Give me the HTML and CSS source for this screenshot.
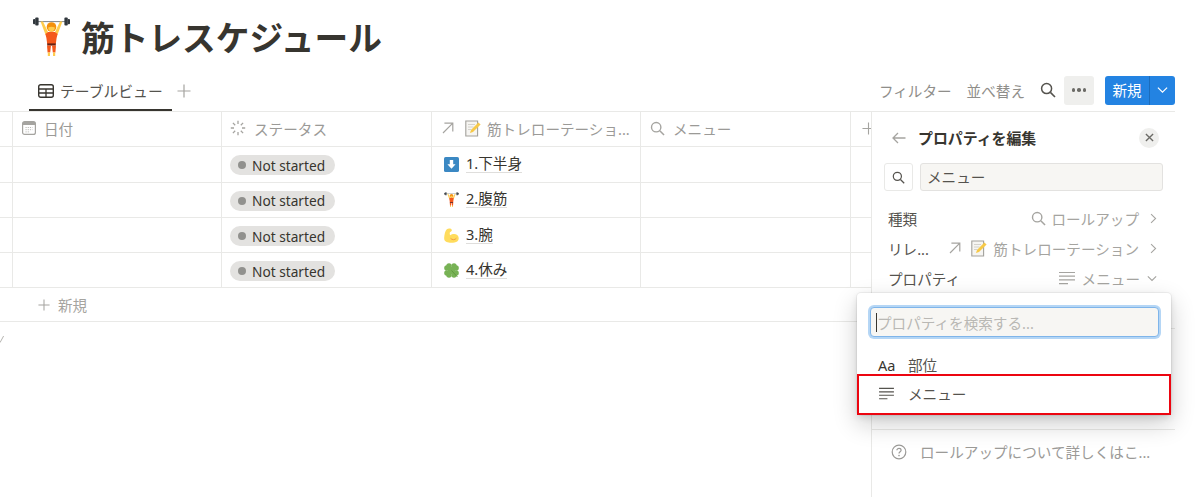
FILE: index.html
```html
<!DOCTYPE html>
<html lang="ja">
<head>
    <meta charset="UTF-8">
    <meta name="viewport" content="width=device-width, initial-scale=1.0">
    <title>筋トレスケジュール</title>
    <link rel="stylesheet" href="styles.css">
</head>
<body>
    <svg class="sprites" xmlns="http://www.w3.org/2000/svg">
        <symbol id="i-lifter" viewBox="0 0 37 39">
            <rect x="3" y="4" width="31" height="1.1" fill="#8a8f94"/>
            <rect x="0" y="2" width="2.4" height="5.2" rx="1" fill="#31373d"/>
            <rect x="2.2" y=".6" width="3.4" height="8" rx="1" fill="#31373d"/>
            <rect x="31.4" y=".6" width="3.4" height="8" rx="1" fill="#31373d"/>
            <rect x="34.6" y="2" width="2.4" height="5.2" rx="1" fill="#31373d"/>
            <path d="M7.6 4.5 L10 4.5 L15 15 L12.6 18 Z" fill="#ffcc4d"/>
            <path d="M29.4 4.5 L27 4.5 L22 15 L24.4 18 Z" fill="#ffcc4d"/>
            <path d="M15 15 L22 15 L24.6 17 L23.6 21 L22.8 27 L14.2 27 L13.4 21 L12.4 17 Z" fill="#f4581c"/>
            <circle cx="18.5" cy="10" r="4.8" fill="#f4900c"/>
            <path d="M15.2 10.6 Q18.5 8.8 21.8 10.6 Q21.8 14.4 18.5 14.4 Q15.2 14.4 15.2 10.6 Z" fill="#ffcc4d"/>
            <rect x="14.2" y="26.4" width="8.6" height="2.2" fill="#662113"/>
            <path d="M14 28.6 L18 28.6 L17.2 35.5 L14.6 35.5 Z" fill="#f4581c"/>
            <path d="M23 28.6 L19 28.6 L19.8 35.5 L22.4 35.5 Z" fill="#f4581c"/>
            <rect x="14.8" y="35.5" width="2.2" height="3.5" fill="#ffcc4d"/>
            <rect x="20" y="35.5" width="2.2" height="3.5" fill="#ffcc4d"/>
        </symbol>
        <symbol id="i-down" viewBox="0 0 15 15">
            <rect x="0" y="0" width="15" height="15" rx="1.6" fill="#3b88c3"/>
            <path d="M5.8 3 H9.2 V7.2 H11.6 L7.5 11.8 L3.4 7.2 H5.8 Z" fill="#fff"/>
        </symbol>
        <symbol id="i-arm" viewBox="0 0 15 15">
            <path d="M2.8 1.2 C4.4 .2 7.4 .4 7.8 2 C8.1 3.4 6.4 4 5.8 4.6 C5.6 5.6 5.8 6.6 6.2 7.2 C8 5.8 11.4 5.4 13.2 7 C15.2 8.8 15.2 12 13.2 13.4 C10.8 15 5.2 15 2.6 14 C.6 13.2 0 11.6 .2 9.6 C.4 6.6 1.2 2.6 2.8 1.2 Z" fill="#ffdc5d"/>
            <path d="M6.6 10.4 C8 12 11 12.2 12.4 10.2" fill="none" stroke="#ef9645" stroke-width=".9"/>
        </symbol>
        <symbol id="i-clover" viewBox="0 0 15 15">
            <g fill="#77b255">
                <circle cx="2.9" cy="5" r="2.7"/><circle cx="5" cy="2.9" r="2.7"/>
                <circle cx="12.1" cy="5" r="2.7"/><circle cx="10" cy="2.9" r="2.7"/>
                <circle cx="2.9" cy="10" r="2.7"/><circle cx="5" cy="12.1" r="2.7"/>
                <circle cx="12.1" cy="10" r="2.7"/><circle cx="10" cy="12.1" r="2.7"/>
                <rect x="4" y="4" width="7" height="7"/>
            </g>
            <path d="M7.5 7.5 L13.5 14" stroke="#5c913b" stroke-width=".8"/>
        </symbol>
        <symbol id="i-memo" viewBox="0 0 16 17">
            <path d="M.8 1 H12.6 V16 H.8 Z" fill="#f6f5f2" stroke="#a3a19c" stroke-width="1.1"/>
            <path d="M3 4.5 H10 M3 7 H8.5 M3 9.5 H6.5" stroke="#ccc9c2" stroke-width=".8"/>
            <path d="M5 13 L6 10 L13.4 2.4 L15.6 4.6 L8 12 Z" fill="#f7c948"/>
        </symbol>
        <symbol id="i-lines" viewBox="0 0 16 14">
            <path d="M0 1.5 H16 M0 5.2 H16 M0 8.9 H16 M0 12.6 H9" fill="none" stroke="currentColor" stroke-width="1.2"/>
        </symbol>
        <symbol id="i-search" viewBox="0 0 16 16">
            <circle cx="6.6" cy="6.6" r="5" fill="none" stroke="currentColor" stroke-width="1.5"/>
            <path d="M10.4 10.4 L15 15" stroke="currentColor" stroke-width="1.6"/>
        </symbol>
        <symbol id="i-arrow" viewBox="0 0 12 12">
            <path d="M1 11 L10.8 1.2 M2.4 1.2 H10.8 V9.6" fill="none" stroke="currentColor" stroke-width="1.2"/>
        </symbol>
        <symbol id="i-right" viewBox="0 0 8 12">
            <path d="M1.2 1 L6.4 6 L1.2 11" fill="none" stroke="currentColor" stroke-width="1.2"/>
        </symbol>
        <symbol id="i-down-chev" viewBox="0 0 12 8">
            <path d="M1 1.4 L6 6.4 L11 1.4" fill="none" stroke="currentColor" stroke-width="1.3"/>
        </symbol>
        <symbol id="i-plus" viewBox="0 0 14 14">
            <path d="M7 .5 V13.5 M.5 7 H13.5" stroke="currentColor" stroke-width="1.2"/>
        </symbol>
        <symbol id="i-help" viewBox="0 0 16 16">
            <circle cx="8" cy="8" r="6.8" fill="none" stroke="currentColor" stroke-width="1.2"/>
            <path d="M5.9 6.3 C5.9 3.8 10.1 3.8 10.1 6.3 C10.1 7.9 8 7.8 8 9.6" fill="none" stroke="currentColor" stroke-width="1.2"/>
            <circle cx="8" cy="11.6" r=".8" fill="currentColor"/>
        </symbol>
    </svg>

    <div class="page">
        <header class="title-row">
            <svg class="title-emoji"><use href="#i-lifter"/></svg>
            <h1>筋トレスケジュール</h1>
        </header>

        <div class="view-bar">
            <div class="tab">
                <svg class="tab-icon" viewBox="0 0 16 14">
                    <rect x=".7" y=".7" width="14.6" height="12.6" rx="2" fill="none" stroke="currentColor" stroke-width="1.4"/>
                    <path d="M1 5 H15 M1 9 H15 M8 5 V13" stroke="currentColor" stroke-width="1.3"/>
                </svg>
                テーブルビュー
            </div>
            <svg class="tab-plus"><use href="#i-plus"/></svg>
            <div class="tools">
                <span class="tool-text">フィルター</span>
                <span class="tool-text">並べ替え</span>
                <svg class="tool-search"><use href="#i-search"/></svg>
                <div class="more-btn"><i></i><i></i><i></i></div>
                <div class="new-btn">
                    <span class="new-label">新規</span>
                    <span class="new-caret"><svg><use href="#i-down-chev"/></svg></span>
                </div>
            </div>
        </div>

        <div class="content">
            <div class="table">
                <div class="row head">
                    <div class="cell"></div>
                    <div class="cell">
                        <svg class="head-icon" viewBox="0 0 14 14">
                            <rect x=".6" y=".6" width="12.8" height="12.8" rx="2" fill="#fff" stroke="#a5a4a0" stroke-width="1.2"/>
                            <rect x="1" y="1" width="12" height="3" fill="#a5a4a0"/>
                            <path d="M3.5 6.5 H10.5 M3.5 8.7 H10.5 M3.5 10.9 H8" stroke="#bdbcb8" stroke-width="1" stroke-dasharray="1.2 1"/>
                        </svg>
                        日付
                    </div>
                    <div class="cell">
                        <svg class="head-icon spin" viewBox="0 0 16 16">
                            <path d="M8 .8 V4 M8 12 V15.2 M.8 8 H4 M12 8 H15.2 M2.9 2.9 L5.2 5.2 M10.8 10.8 L13.1 13.1 M13.1 2.9 L10.8 5.2 M5.2 10.8 L2.9 13.1" stroke="#a5a4a0" stroke-width="1.3"/>
                        </svg>
                        ステータス
                    </div>
                    <div class="cell">
                        <svg class="head-arrow"><use href="#i-arrow"/></svg>
                        <svg class="head-memo"><use href="#i-memo"/></svg>
                        <span>筋トレローテーショ...</span>
                    </div>
                    <div class="cell">
                        <svg class="head-icon search"><use href="#i-search"/></svg>
                        メニュー
                    </div>
                    <div class="cell add-col"><svg><use href="#i-plus"/></svg></div>
                </div>

                <div class="row">
                    <div class="cell"></div>
                    <div class="cell"></div>
                    <div class="cell"><span class="pill"><i></i>Not started</span></div>
                    <div class="cell"><svg class="rel-icon"><use href="#i-down"/></svg><span class="rel">1.下半身</span></div>
                    <div class="cell"></div>
                    <div class="cell"></div>
                </div>
                <div class="row">
                    <div class="cell"></div>
                    <div class="cell"></div>
                    <div class="cell"><span class="pill"><i></i>Not started</span></div>
                    <div class="cell"><svg class="rel-icon"><use href="#i-lifter"/></svg><span class="rel">2.腹筋</span></div>
                    <div class="cell"></div>
                    <div class="cell"></div>
                </div>
                <div class="row">
                    <div class="cell"></div>
                    <div class="cell"></div>
                    <div class="cell"><span class="pill"><i></i>Not started</span></div>
                    <div class="cell"><svg class="rel-icon"><use href="#i-arm"/></svg><span class="rel">3.腕</span></div>
                    <div class="cell"></div>
                    <div class="cell"></div>
                </div>
                <div class="row">
                    <div class="cell"></div>
                    <div class="cell"></div>
                    <div class="cell"><span class="pill"><i></i>Not started</span></div>
                    <div class="cell"><svg class="rel-icon"><use href="#i-clover"/></svg><span class="rel">4.休み</span></div>
                    <div class="cell"></div>
                    <div class="cell"></div>
                </div>

                <div class="new-row">
                    <svg><use href="#i-plus"/></svg>
                    新規
                </div>
                <svg class="calc-mark" viewBox="0 0 4 8"><path d="M-2 7 L0 7.6 L3.6 1" fill="none" stroke="#b5b4b0" stroke-width="1"/></svg>
            </div>

            <aside class="panel">
                <div class="panel-head">
                    <svg class="back" viewBox="0 0 14 12"><path d="M13.5 6 H1 M6 1 L1 6 L6 11" fill="none" stroke="currentColor" stroke-width="1.3"/></svg>
                    <span class="panel-title">プロパティを編集</span>
                    <span class="close">
                        <svg viewBox="0 0 10 10"><path d="M1 1 L9 9 M9 1 L1 9" stroke="currentColor" stroke-width="1.5"/></svg>
                    </span>
                </div>
                <div class="panel-search">
                    <span class="icon-box"><svg><use href="#i-search"/></svg></span>
                    <span class="name-input">メニュー</span>
                </div>
                <div class="prop">
                    <span class="prop-name">種類</span>
                    <span class="prop-value">
                        <svg class="v-search"><use href="#i-search"/></svg>ロールアップ
                        <svg class="chev"><use href="#i-right"/></svg>
                    </span>
                </div>
                <div class="prop">
                    <span class="prop-name">リレ...</span>
                    <span class="prop-value">
                        <svg class="v-arrow"><use href="#i-arrow"/></svg>
                        <svg class="v-memo"><use href="#i-memo"/></svg>筋トレローテーション
                        <svg class="chev"><use href="#i-right"/></svg>
                    </span>
                </div>
                <div class="prop">
                    <span class="prop-name">プロパティ</span>
                    <span class="prop-value">
                        <svg class="v-lines"><use href="#i-lines"/></svg>メニュー
                        <svg class="chev-down"><use href="#i-down-chev"/></svg>
                    </span>
                </div>
                <div class="panel-rule first"></div>
                <div class="hidden-row"><svg><use href="#i-help"/></svg></div>
                <div class="panel-rule"></div>
                <div class="help">
                    <svg><use href="#i-help"/></svg>
                    ロールアップについて詳しくはこ...
                </div>
            </aside>
        </div>

        <div class="popover">
            <div class="pop-input"><i class="caret"></i>プロパティを検索する...</div>
            <div class="pop-item"><span class="aa">Aa</span>部位</div>
            <div class="pop-item"><svg><use href="#i-lines"/></svg>メニュー</div>
            <div class="red-box"></div>
        </div>
    </div>
</body>
</html>
```

FILE: styles.css
```css
* {
    box-sizing: border-box;
}
html, body {
    height: 100%;
}
body {
    margin: 0;
    background-color: #ffffff;
    color: #37352f;
    font-family: "Noto Sans", "Noto Sans CJK JP", sans-serif;
    font-size: 14.6px;
    overflow: hidden;
}
svg {
    display: block;
    flex: none;
}
.sprites {
    display: none;
}
.page {
    position: relative;
    height: 497px;
    padding-right: 25px;
    display: flex;
    flex-direction: column;
}

/* title */
.title-row {
    height: 74px;
    padding: 17px 0 0 33px;
    display: flex;
    align-items: flex-start;
    gap: 11px;
}
.title-emoji {
    width: 37px;
    height: 39px;
}
h1 {
    margin: 0;
    font-size: 33.7px;
    line-height: 42px;
    font-weight: 700;
    color: #37352f;
}

/* tabs + tools */
.view-bar {
    height: 38px;
    padding-left: 29px;
    display: flex;
    align-items: flex-start;
    border-bottom: 1px solid #e9e9e7;
}
.tab {
    width: 143px;
    height: 37px;
    display: flex;
    align-items: center;
    gap: 6px;
    padding: 0 0 2px 9px;
    border-bottom: 2px solid #37352f;
    color: #55534e;
    font-size: 14.8px;
}
.tab-icon {
    width: 16px;
    height: 14px;
    color: #37352f;
}
.tab-plus {
    width: 14px;
    height: 14px;
    margin: 10px 0 0 5px;
    color: #a5a4a0;
}
.tools {
    margin-left: auto;
    padding-top: 1px;
    display: flex;
    align-items: center;
    height: 31px;
}
.tool-text {
    margin-right: 15px;
    color: #8f8e8a;
}
.tool-search {
    width: 16px;
    height: 16px;
    margin: 0 8px 0 0;
    color: #55534e;
}
.more-btn {
    width: 30px;
    height: 29px;
    margin-right: 11px;
    background-color: #efefed;
    border-radius: 3px;
    display: flex;
    align-items: center;
    justify-content: center;
    gap: 2px;
}
.more-btn i {
    width: 3.5px;
    height: 3.5px;
    border-radius: 50%;
    background-color: #6b6a66;
}
.new-btn {
    width: 70px;
    height: 29px;
    display: flex;
    background-color: #2383e2;
    border-radius: 3px;
    color: #ffffff;
}
.new-label {
    width: 45px;
    text-align: center;
    line-height: 28px;
    border-right: 1px solid #1b6cbc;
}
.new-caret {
    flex: 1;
    display: flex;
    align-items: center;
    justify-content: center;
}
.new-caret svg {
    width: 11px;
    height: 8px;
}

/* table */
.content {
    flex: 1;
    display: flex;
    min-height: 0;
}
.table {
    width: 871px;
    overflow: hidden;
}
.row {
    height: 35.3px;
    display: grid;
    grid-template-columns: 13px 209px 210px 209px 210px 1fr;
    border-bottom: 1px solid #e9e9e7;
}
.cell {
    border-right: 1px solid #e9e9e7;
    padding-left: 9px;
    display: flex;
    align-items: center;
    min-width: 0;
    white-space: nowrap;
}
.cell:last-child {
    border-right: none;
}
.head {
    color: #9b9a97;
}
.head .cell {
    padding-bottom: 2px;
}
.head-icon {
    width: 14px;
    height: 14px;
    margin-right: 8px;
}
.head-icon.spin {
    width: 16px;
    height: 16px;
    margin-right: 8px;
    margin-left: -1px;
}
.head-icon.search {
    width: 15px;
    height: 15px;
    color: #a5a4a0;
}
.head-arrow {
    width: 12px;
    height: 12px;
    margin: 0 11px 0 1px;
    color: #a5a4a0;
}
.head-memo {
    width: 16px;
    height: 17px;
    margin-right: 6px;
}
.add-col {
    padding-left: 11px;
    color: #a5a4a0;
}
.add-col svg {
    width: 13px;
    height: 13px;
}
.pill {
    height: 20px;
    width: 105px;
    margin: 2px 0 0 -1px;
    padding-left: 8px;
    display: flex;
    align-items: center;
    gap: 6px;
    background-color: #e3e2e0;
    border-radius: 10px;
    color: #37352f;
    font-size: 13.7px;
}
.pill i {
    width: 8px;
    height: 8px;
    border-radius: 50%;
    background-color: #91918e;
}
.rel-icon {
    width: 15px;
    height: 15px;
    margin: 0 8px 0 3px;
}
.rel {
    margin: 0 0 2px -1px;
    border-bottom: 1px solid #dfdedc;
    line-height: 18px;
    color: #37352f;
}
.new-row {
    height: 34px;
    padding-left: 38px;
    display: flex;
    align-items: center;
    gap: 8px;
    color: #a5a4a0;
    border-bottom: 1px solid #e9e9e7;
}
.new-row svg {
    width: 12px;
    height: 12px;
}
.calc-mark {
    width: 4px;
    height: 8px;
    margin-top: 13px;
}

/* side panel */
.panel {
    width: 304px;
    padding: 0 12px;
    border-left: 1px solid #e9e9e7;
    background-color: #ffffff;
    position: relative;
}
.panel-head {
    height: 51px;
    display: flex;
    align-items: center;
    padding-left: 8px;
    gap: 12px;
}
.back {
    width: 14px;
    height: 12px;
    color: #a5a4a0;
}
.panel-title {
    font-weight: 700;
    font-size: 14.9px;
    color: #37352f;
}
.close {
    margin-left: auto;
    margin-right: 4px;
    width: 20px;
    height: 20px;
    border-radius: 50%;
    background-color: #efefed;
    color: #6b6a66;
    display: flex;
    align-items: center;
    justify-content: center;
}
.close svg {
    width: 9px;
    height: 9px;
}
.panel-search {
    display: flex;
    gap: 7px;
    height: 28px;
}
.icon-box {
    width: 29px;
    border: 1px solid #e9e9e7;
    border-radius: 3px;
    display: flex;
    align-items: center;
    justify-content: center;
    color: #55534e;
}
.icon-box svg {
    width: 13px;
    height: 13px;
}
.name-input {
    flex: 1;
    padding-left: 6px;
    line-height: 26px;
    background-color: #f7f6f3;
    border: 1px solid #e3e2e0;
    border-radius: 3px;
    color: #55534e;
}
.prop {
    height: 30px;
    padding: 0 6px 0 4px;
    display: flex;
    align-items: center;
    justify-content: space-between;
}
.panel-search + .prop {
    margin-top: 12px;
}
.prop-name {
    color: #55534e;
}
.prop-value {
    display: flex;
    align-items: center;
    color: #a5a4a0;
}
.v-search {
    width: 15px;
    height: 15px;
    margin-right: 5px;
}
.v-arrow {
    width: 12px;
    height: 12px;
    margin-right: 10px;
}
.v-memo {
    width: 16px;
    height: 17px;
    margin-right: 6px;
}
.v-lines {
    width: 16px;
    height: 14px;
    margin-right: 7px;
}
.chev {
    width: 7px;
    height: 11px;
    margin-left: 11px;
}
.chev-down {
    width: 10px;
    height: 7px;
    margin-left: 7px;
}
.panel-rule {
    height: 1px;
    margin: 0 -12px;
    background-color: #e9e9e7;
}
.panel-rule.first {
    margin-top: 35px;
}
.hidden-row {
    height: 100px;
    padding: 73px 0 0 20px;
    color: #a5a4a0;
}
.hidden-row svg {
    width: 13px;
    height: 13px;
}
.help {
    height: 44px;
    padding: 0 0 1px 7px;
    display: flex;
    align-items: center;
    gap: 13px;
    color: #9b9a97;
}
.help svg {
    width: 16px;
    height: 16px;
}

/* dropdown + annotation */
.popover {
    position: absolute;
    left: 857px;
    top: 293px;
    width: 314px;
    height: 122px;
    padding: 14px 12px 0 13px;
    background-color: #ffffff;
    border-radius: 4px;
    box-shadow: 0 0 0 1px rgba(15, 15, 15, 0.05), 0 3px 6px rgba(15, 15, 15, 0.1), 0 9px 24px rgba(15, 15, 15, 0.2);
}
.pop-input {
    height: 30px;
    margin-bottom: 13px;
    padding-left: 5px;
    display: flex;
    align-items: center;
    background-color: #f7f6f3;
    border: 1px solid #7fb5ea;
    border-radius: 4px;
    box-shadow: 0 0 0 2px #b5d6f5;
    color: #b9b8b4;
}
.caret {
    width: 1px;
    height: 19px;
    background-color: #37352f;
}
.pop-item {
    height: 29px;
    display: flex;
    align-items: center;
    padding-left: 8px;
    color: #55534e;
}
.aa {
    width: 30px;
    font-size: 14.5px;
    color: #37352f;
}
.pop-item svg {
    width: 15px;
    height: 13px;
    margin: 0 14px 0 1px;
    color: #55534e;
}
.red-box {
    position: absolute;
    left: 0;
    right: 0;
    top: 81px;
    bottom: 0;
    border: 2.5px solid #ec0510;
}
```
